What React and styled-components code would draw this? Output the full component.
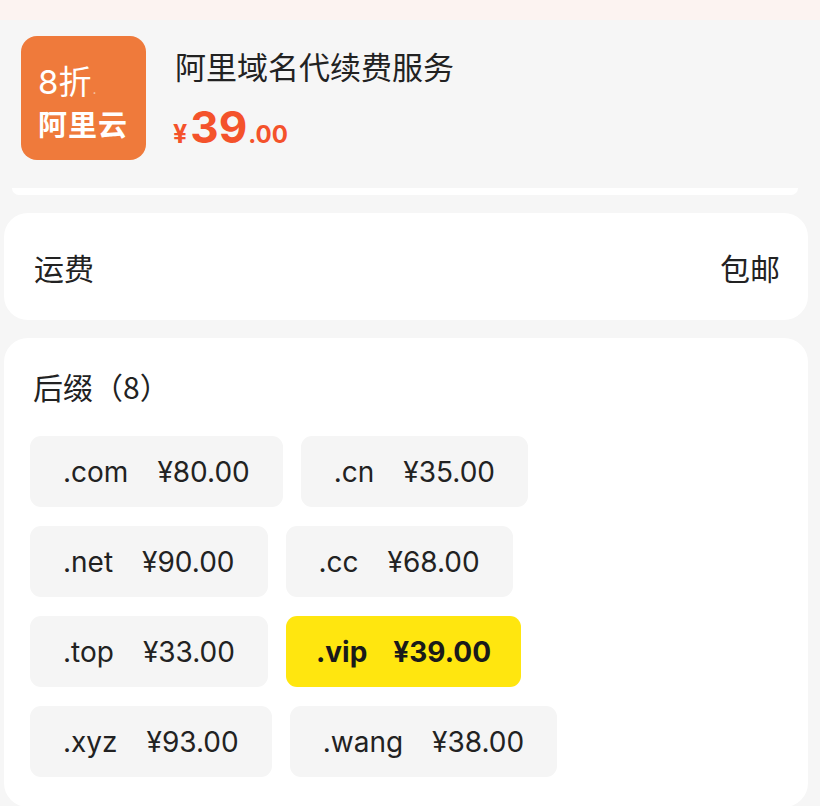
import React from "react";
import styled, { createGlobalStyle } from "styled-components";

const Global = createGlobalStyle`
  html, body { margin: 0; padding: 0; background: #f6f6f6; }
  body { font-family: "Noto Sans CJK SC", "Noto Sans", sans-serif; color: #222; }
`;

const LATIN = `Inter, "Noto Sans CJK SC", sans-serif`;

const Page = styled.div`
  width: 820px;
  height: 806px;
  overflow: hidden;
  background: #f6f6f6;
  display: flex;
  flex-direction: column;
  & > * { flex-shrink: 0; }
`;

const TopStrip = styled.div`
  height: 20px;
  background: #fcf3f1;
`;

const Header = styled.div`
  display: flex;
  gap: 29px;
  padding: 16px 21px 0;
`;

const Logo = styled.div`
  width: 125px;
  height: 124px;
  border-radius: 16px;
  background: #ef7a3b;
  color: #fff;
  display: flex;
  flex-direction: column;
  justify-content: center;
  padding: 8px 0 0 17px;
  box-sizing: border-box;
`;

const LogoTop = styled.div`
  font-family: ${LATIN};
  font-size: 33px;
  line-height: 42px;
  font-weight: 400;
  display: flex;
  align-items: flex-end;
`;

const LogoDot = styled.span`
  font-size: 14px;
  line-height: 20px;
  color: #f6c7a8;
  margin-left: 1px;
  margin-bottom: 4px;
`;

const LogoBottom = styled.div`
  font-size: 29px;
  line-height: 40px;
  font-weight: 700;
  letter-spacing: 1px;
`;

const Info = styled.div`
  display: flex;
  flex-direction: column;
  padding-top: 8px;
`;

const Title = styled.div`
  font-size: 31px;
  line-height: 44px;
  color: #222;
`;

const Price = styled.div`
  font-family: ${LATIN};
  color: #f4522b;
  display: flex;
  align-items: baseline;
  margin-top: 15px;
  line-height: 48px;
`;

const Yen = styled.span`
  font-size: 25px;
  font-weight: 700;
  margin-left: -2px;
  margin-right: 3px;
`;

const Big = styled.span`
  font-size: 44px;
  font-weight: 700;
`;

const Small = styled.span`
  font-size: 24px;
  font-weight: 700;
  margin-left: 1px;
`;

const CardEdge = styled.div`
  margin: 28px 22px 0 12px;
  height: 7px;
  background: #fff;
  border-radius: 0 0 12px 12px;
`;

const Card = styled.div`
  margin: ${(p) => p.$mt}px 12px 0 4px;
  background: #fff;
  border-radius: 24px;
`;

const Row = styled.div`
  height: 107px;
  display: flex;
  align-items: center;
  justify-content: space-between;
  padding: 0 28px 0 30px;
  font-size: 30px;
  color: #222;
`;

const SectionTitle = styled.div`
  font-size: 30px;
  line-height: 40px;
  padding: 28px 0 0 29px;
  color: #222;
`;

const Chips = styled.div`
  display: flex;
  flex-wrap: wrap;
  max-width: 600px;
  column-gap: 18px;
  row-gap: 19px;
  padding: 30px 0 30px 26px;
`;

const Chip = styled.div`
  height: 71px;
  border-radius: 11px;
  background: ${(p) => (p.$active ? "#ffe60f" : "#f5f5f5")};
  font-family: ${LATIN};
  font-weight: ${(p) => (p.$active ? 700 : 400)};
  font-size: 28px;
  color: ${(p) => (p.$active ? "#1a1a1a" : "#222")};
  display: flex;
  align-items: center;
  gap: ${(p) => (p.$active ? 26 : 29)}px;
  padding: 0 ${(p) => (p.$active ? 30 : 33)}px;
  white-space: nowrap;
`;

const items = [
  [".com", "¥80.00"],
  [".cn", "¥35.00"],
  [".net", "¥90.00"],
  [".cc", "¥68.00"],
  [".top", "¥33.00"],
  [".vip", "¥39.00", true],
  [".xyz", "¥93.00"],
  [".wang", "¥38.00"],
];

export default function App() {
  return (
    <Page>
      <Global />
      <TopStrip />
      <Header>
        <Logo>
          <LogoTop>
            8折<LogoDot>.</LogoDot>
          </LogoTop>
          <LogoBottom>阿里云</LogoBottom>
        </Logo>
        <Info>
          <Title>阿里域名代续费服务</Title>
          <Price>
            <Yen>¥</Yen>
            <Big>39</Big>
            <Small>.00</Small>
          </Price>
        </Info>
      </Header>
      <CardEdge />
      <Card $mt={18}>
        <Row>
          <span>运费</span>
          <span>包邮</span>
        </Row>
      </Card>
      <Card $mt={18}>
        <SectionTitle>后缀（8）</SectionTitle>
        <Chips>
          {items.map(([s, p, a]) => (
            <Chip key={s} $active={a}>
              <span>{s}</span>
              <span>{p}</span>
            </Chip>
          ))}
        </Chips>
      </Card>
    </Page>
  );
}
